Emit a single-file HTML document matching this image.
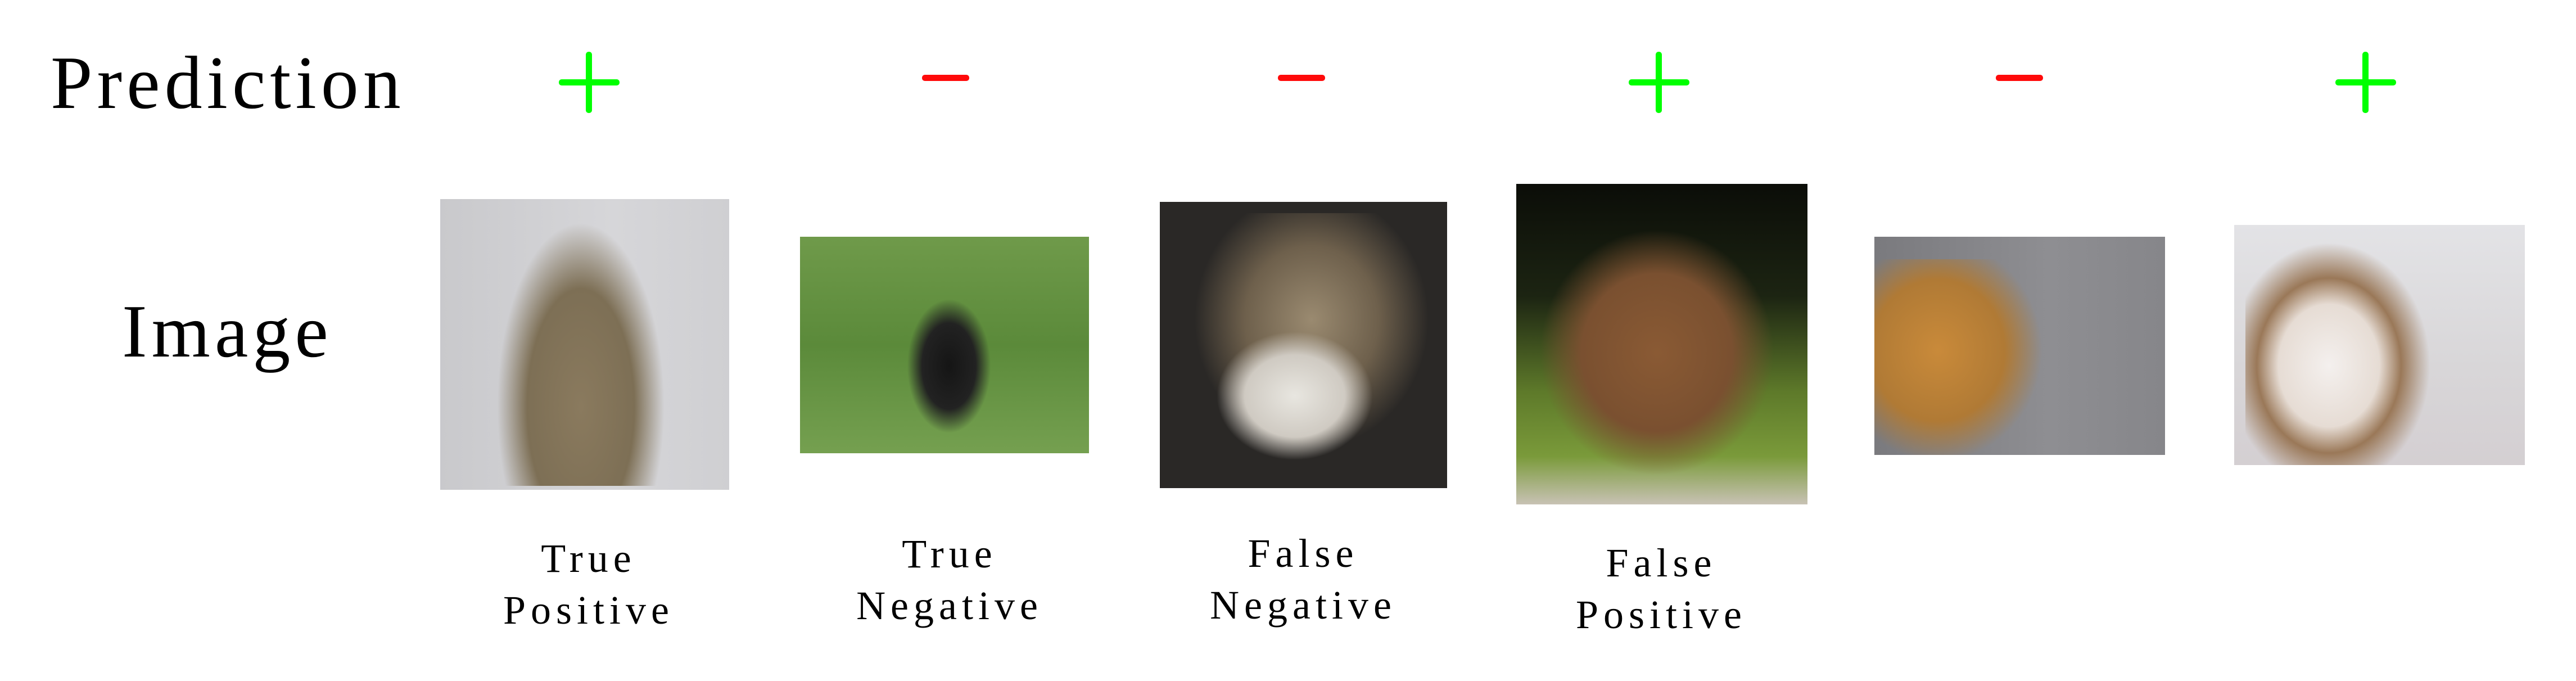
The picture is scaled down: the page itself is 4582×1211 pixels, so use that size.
<!DOCTYPE html>
<html><head><meta charset="utf-8"><style>
html,body{margin:0;padding:0;background:#fff;}
body{width:4582px;height:1211px;position:relative;overflow:hidden;font-family:"Liberation Serif",serif;color:#000;}
.t{position:absolute;white-space:nowrap;line-height:1;}
.big{font-size:134px;}
.lab{position:absolute;width:600px;text-align:center;font-size:72px;letter-spacing:9px;line-height:92px;}
.h{position:absolute;background:#00ff00;border-radius:5px;}
.m{position:absolute;background:#ff0a0a;border-radius:5px;width:84px;height:11px;}
.img{position:absolute;overflow:hidden;}
</style></head><body>
<div class="t big" style="left:90px;top:80px;letter-spacing:8px;">Prediction</div>
<div class="t big" style="left:217px;top:522px;letter-spacing:8px;">Image</div>

<!-- plus signs -->
<div class="h" style="left:994px;top:141px;width:108px;height:11px;"></div>
<div class="h" style="left:1042px;top:92px;width:11px;height:109px;"></div>
<div class="h" style="left:2897px;top:141px;width:108px;height:11px;"></div>
<div class="h" style="left:2945px;top:92px;width:11px;height:109px;"></div>
<div class="h" style="left:4154px;top:141px;width:108px;height:11px;"></div>
<div class="h" style="left:4202px;top:92px;width:11px;height:109px;"></div>
<!-- minus signs -->
<div class="m" style="left:1640px;top:133px;"></div>
<div class="m" style="left:2273px;top:133px;"></div>
<div class="m" style="left:3550px;top:133px;"></div>

<!-- images -->
<div class="img" style="left:783px;top:354px;width:514px;height:517px;background:linear-gradient(90deg,#c9c9cc,#d6d6d9 60%,#cfcfd2);">
 <div style="position:absolute;left:100px;top:40px;width:300px;height:470px;background:radial-gradient(ellipse at 50% 70%,#8a7a5e 0%,#7d6f55 45%,rgba(150,140,120,0) 70%);"></div>
</div>
<div class="img" style="left:1423px;top:421px;width:514px;height:385px;background:linear-gradient(180deg,#6f9a4a,#5b8a3a 50%,#75a050);">
 <div style="position:absolute;left:190px;top:110px;width:150px;height:240px;background:radial-gradient(ellipse at 50% 50%,#151515 0%,#222 45%,rgba(0,0,0,0) 70%);"></div>
</div>
<div class="img" style="left:2063px;top:359px;width:511px;height:509px;background:#2a2826;">
 <div style="position:absolute;left:60px;top:20px;width:420px;height:420px;background:radial-gradient(ellipse at 50% 45%,#9a8a70 0%,#6e604c 40%,rgba(40,38,36,0) 70%);"></div>
 <div style="position:absolute;left:100px;top:230px;width:280px;height:230px;background:radial-gradient(ellipse,#e8e6e0 0%,#cfcac2 45%,rgba(0,0,0,0) 70%);"></div>
</div>
<div class="img" style="left:2697px;top:327px;width:518px;height:570px;background:linear-gradient(180deg,#0b0d08 0%,#1c2412 35%,#5e7a2a 65%,#7a9a3a 85%,#c8c2b4 100%);">
 <div style="position:absolute;left:40px;top:80px;width:420px;height:440px;background:radial-gradient(ellipse at 50% 50%,#8a5a34 0%,#7a5030 45%,rgba(0,0,0,0) 70%);"></div>
</div>
<div class="img" style="left:3334px;top:421px;width:517px;height:388px;background:linear-gradient(90deg,#7a7a7e,#8e8e92 60%,#86868a);">
 <div style="position:absolute;left:-40px;top:40px;width:340px;height:360px;background:radial-gradient(ellipse at 45% 45%,#c98a3a 0%,#b07a35 45%,rgba(0,0,0,0) 70%);"></div>
</div>
<div class="img" style="left:3974px;top:400px;width:517px;height:427px;background:linear-gradient(180deg,#e3e3e6,#d8d6d8 60%,#d4cfd2);">
 <div style="position:absolute;left:20px;top:30px;width:330px;height:400px;background:radial-gradient(ellipse at 45% 55%,#f4f0ee 0%,#e6dcd4 35%,#9a7858 50%,rgba(0,0,0,0) 70%);"></div>
</div>

<!-- labels -->
<div class="lab" style="left:747px;top:947px;">True<br>Positive</div>
<div class="lab" style="left:1389px;top:939px;">True<br>Negative</div>
<div class="lab" style="left:2018px;top:938px;">False<br>Negative</div>
<div class="lab" style="left:2655px;top:955px;">False<br>Positive</div>
</body></html>
